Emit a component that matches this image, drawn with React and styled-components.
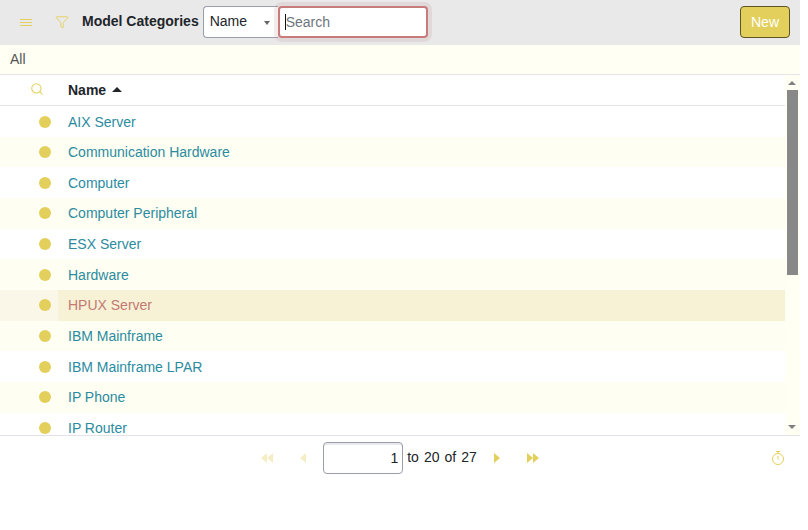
import React from 'react'
import styled, { createGlobalStyle } from 'styled-components'
import { Filter, Search } from 'lucide-react'

const categories = [
  'AIX Server',
  'Communication Hardware',
  'Computer',
  'Computer Peripheral',
  'ESX Server',
  'Hardware',
  'HPUX Server',
  'IBM Mainframe',
  'IBM Mainframe LPAR',
  'IP Phone',
  'IP Router',
]

const Triangle = ({ dir = 'right', size = 6 }) => (
  <svg width={size} height="10" viewBox="0 0 6 10" fill="currentColor">
    {dir === 'right' ? <path d="M0 0 L6 5 L0 10 Z" /> : <path d="M6 0 L0 5 L6 10 Z" />}
  </svg>
)

const TimerIcon = () => (
  <svg width="12" height="14" viewBox="0 0 12 14" fill="none" stroke="currentColor" strokeWidth="1">
    <path d="M4 0.5 H8 M6 0.5 V2.5" />
    <circle cx="6" cy="8" r="5.5" />
    <path d="M6 5 V8.5" />
  </svg>
)

const App = () => (
  <Page>
    <GlobalStyle />
    <Toolbar>
      <MenuIcon>
        <span />
        <span />
        <span />
      </MenuIcon>
      <FilterButton>
        <Filter size={14} strokeWidth={1.6} />
      </FilterButton>
      <Title>Model Categories</Title>
      <SearchGroup>
        <FieldSelect>
          Name
          <SelectCaret />
        </FieldSelect>
        <SearchBox>
          <SearchInput placeholder="Search" />
          <TextCaret />
        </SearchBox>
      </SearchGroup>
      <NewButton>New</NewButton>
    </Toolbar>
    <FilterStrip>All</FilterStrip>
    <TableArea>
      <TableColumn>
        <HeaderRow>
          <StatusHeader>
            <Search size={14} strokeWidth={1.8} />
          </StatusHeader>
          <NameHeader>
            Name
            <SortCaret />
          </NameHeader>
        </HeaderRow>
        {categories.map((name, i) => (
          <Row key={name} $odd={i % 2 === 1} $active={name === 'HPUX Server'}>
            <StatusCell>
              <Dot />
            </StatusCell>
            <NameCell $active={name === 'HPUX Server'}>{name}</NameCell>
          </Row>
        ))}
      </TableColumn>
      <ScrollRail>
        <RailArrow $up />
        <RailThumb />
        <RailSpacer />
        <RailArrow />
      </ScrollRail>
    </TableArea>
    <Pager>
      <PagerCenter>
        <PagerIcon $disabled $gapRight={27}>
          <Triangle dir="left" />
          <Triangle dir="left" />
        </PagerIcon>
        <PagerIcon $disabled $gapRight={17}>
          <Triangle dir="left" />
        </PagerIcon>
        <PageInput defaultValue="1" />
        <PagerText>
          <span>to</span>
          <span>20</span>
          <span>of</span>
          <span>27</span>
        </PagerText>
        <PagerIcon $gapRight={27}>
          <Triangle />
        </PagerIcon>
        <PagerIcon>
          <Triangle />
          <Triangle />
        </PagerIcon>
      </PagerCenter>
      <TimerSlot>
        <TimerIcon />
      </TimerSlot>
    </Pager>
  </Page>
)

const GlobalStyle = createGlobalStyle`
  html, body {
    margin: 0;
    background: #fff;
  }
  body {
    font-family: "Liberation Sans", Arial, sans-serif;
    font-size: 14px;
    color: #212529;
  }
`

const Page = styled.div`
  width: 800px;
  height: 530px;
  display: flex;
  flex-direction: column;
`

const Toolbar = styled.div`
  height: 45px;
  flex: none;
  background: #e9e9e9;
  display: flex;
  align-items: center;
  padding: 0 10px 1px 0;
  box-sizing: border-box;
`

const MenuIcon = styled.div`
  width: 12px;
  margin-left: 20px;
  display: flex;
  flex-direction: column;
  gap: 2px;

  span {
    display: block;
    height: 1px;
    background: #e3d05c;
  }
`

const FilterButton = styled.div`
  margin-left: 23px;
  display: flex;
  color: #e3d05c;
`

const Title = styled.div`
  margin-left: 13px;
  margin-top: -2px;
  font-weight: 700;
  color: #212529;
`

const SearchGroup = styled.div`
  margin-left: 4px;
  display: flex;
  align-items: center;
`

const FieldSelect = styled.div`
  width: 75px;
  height: 32px;
  box-sizing: border-box;
  padding: 0 0 3px 6px;
  background: #fff;
  border: 1px solid #9a9eac;
  border-right: none;
  border-radius: 4px 0 0 4px;
  display: flex;
  align-items: center;
  position: relative;
`

const SelectCaret = styled.span`
  position: absolute;
  right: 8px;
  top: 14px;
  border-left: 3.5px solid transparent;
  border-right: 3.5px solid transparent;
  border-top: 4px solid #666;
`

const SearchBox = styled.div`
  position: relative;
  display: flex;
`

const SearchInput = styled.input`
  width: 150px;
  height: 32px;
  box-sizing: border-box;
  padding: 0 6px;
  font: inherit;
  font-size: 14px;
  color: #212529;
  background: #fff;
  border: 2px solid #c77b7b;
  border-radius: 4px;
  box-shadow: 0 0 0 4px rgba(180, 130, 130, 0.15);
  outline: none;

  &::placeholder {
    color: #6c757d;
    opacity: 1;
  }
`

const TextCaret = styled.span`
  position: absolute;
  left: 7px;
  top: 8px;
  width: 1px;
  height: 16px;
  background: #111;
`

const NewButton = styled.button`
  margin-left: auto;
  width: 50px;
  height: 32px;
  padding: 0;
  font: inherit;
  color: #fff;
  background: #e3d05c;
  border: 1px solid #5f5523;
  border-radius: 4px;
`

const FilterStrip = styled.div`
  height: 30px;
  flex: none;
  box-sizing: border-box;
  padding: 0 10px 2px;
  display: flex;
  align-items: center;
  background: #fffff3;
  border-bottom: 1px solid #e4e4e4;
  color: #555;
`

const TableArea = styled.div`
  height: 360px;
  flex: none;
  display: flex;
  border-bottom: 1px solid #e2e2e8;
  box-sizing: content-box;
`

const TableColumn = styled.div`
  flex: 1;
  min-width: 0;
  overflow: hidden;
`

const HeaderRow = styled.div`
  height: 31.2px;
  box-sizing: border-box;
  display: flex;
  align-items: center;
  border-bottom: 1px solid #e4e4e4;
`

const StatusHeader = styled.div`
  width: 58px;
  margin-top: -2px;
  padding-left: 30px;
  box-sizing: border-box;
  display: flex;
  color: #e3d05c;
`

const NameHeader = styled.div`
  padding-left: 10px;
  font-weight: 700;
  display: flex;
  align-items: center;
`

const SortCaret = styled.span`
  margin-left: 6px;
  margin-top: -2px;
  border-left: 5px solid transparent;
  border-right: 5px solid transparent;
  border-bottom: 5px solid #212529;
`

const Row = styled.div`
  height: 30.65px;
  display: flex;
  align-items: stretch;
  background: ${p => (p.$active ? '#faf7e8' : p.$odd ? '#fffef3' : '#fff')};
`

const StatusCell = styled.div`
  width: 58px;
  flex: none;
  display: flex;
  align-items: center;
  padding-left: 39px;
  box-sizing: border-box;
`

const Dot = styled.span`
  width: 12px;
  height: 12px;
  border-radius: 50%;
  background: #e3d05c;
`

const NameCell = styled.div`
  flex: 1;
  padding-left: 10px;
  display: flex;
  align-items: center;
  color: ${p => (p.$active ? '#c27a72' : '#2b8c9f')};
  background: ${p => (p.$active ? '#f7f1d5' : 'transparent')};
`

const ScrollRail = styled.div`
  width: 15px;
  flex: none;
  background: #fffff3;
  display: flex;
  flex-direction: column;
  align-items: center;
`

const RailArrow = styled.div`
  height: 15px;
  width: 100%;
  flex: none;
  position: relative;

  &::after {
    content: '';
    position: absolute;
    left: 3px;
    top: ${p => (p.$up ? '6px' : '5px')};
    border-left: 4px solid transparent;
    border-right: 4px solid transparent;
    ${p => (p.$up ? 'border-bottom: 4px solid #808080;' : 'border-top: 4px solid #808080;')}
  }
`

const RailThumb = styled.div`
  width: 11px;
  height: 185px;
  flex: none;
  background: #888;
`

const RailSpacer = styled.div`
  flex: 1;
`

const Pager = styled.div`
  height: 45px;
  flex: none;
  box-sizing: border-box;
  padding-bottom: 1px;
  position: relative;
  display: flex;
  align-items: center;
  justify-content: center;
`

const PagerCenter = styled.div`
  display: flex;
  align-items: center;
`

const PagerIcon = styled.div`
  display: flex;
  color: #e3d05c;
  opacity: ${p => (p.$disabled ? 0.35 : 1)};
  margin-right: ${p => p.$gapRight || 0}px;
`

const PageInput = styled.input`
  width: 80px;
  height: 32px;
  box-sizing: border-box;
  padding: 0 4px;
  text-align: right;
  font: inherit;
  font-size: 14px;
  color: #212529;
  background: #fff;
  border: 1px solid #9a9eac;
  border-radius: 4px;
  box-shadow: inset 0 2px 0 #e9e9e9;
  outline: none;
`

const PagerText = styled.div`
  margin: -2px 17px 0 4px;
  display: flex;
  gap: 5px;
`

const TimerSlot = styled.div`
  position: absolute;
  right: 16px;
  top: 15px;
  display: flex;
  color: #e3d05c;
`

export default App
